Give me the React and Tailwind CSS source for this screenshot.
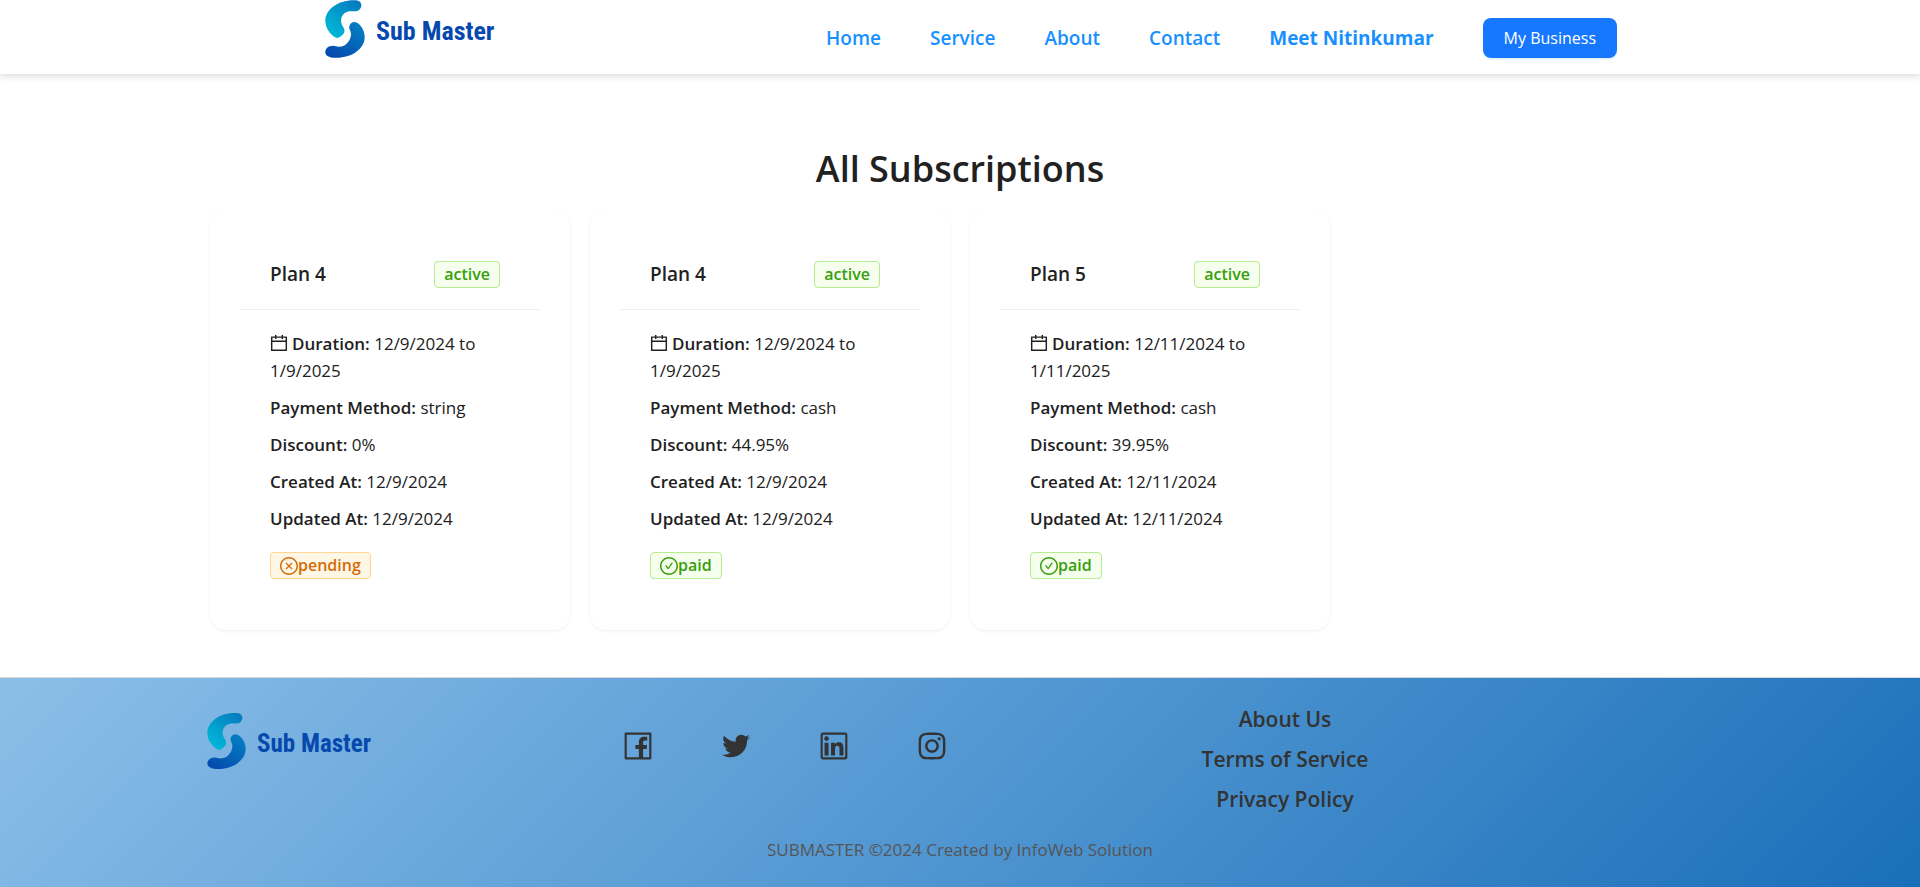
import React from "react";
import {
  AiOutlineCalendar,
  AiOutlineCheckCircle,
  AiOutlineCloseCircle,
  AiOutlineFacebook,
  AiOutlineInstagram,
  AiOutlineLinkedin,
  AiOutlineTwitter,
} from "react-icons/ai";

const ICON_BOX = "64 64 896 896";

const subscriptions = [
  { id: 1, plan: "Plan 4", from: "12/9/2024", to: "1/9/2025", method: "string", discount: "0%", created: "12/9/2024", updated: "12/9/2024", payment: "pending" },
  { id: 2, plan: "Plan 4", from: "12/9/2024", to: "1/9/2025", method: "cash", discount: "44.95%", created: "12/9/2024", updated: "12/9/2024", payment: "paid" },
  { id: 3, plan: "Plan 5", from: "12/11/2024", to: "1/11/2025", method: "cash", discount: "39.95%", created: "12/11/2024", updated: "12/11/2024", payment: "paid" },
];

const socials = [
  { name: "Facebook", Icon: AiOutlineFacebook },
  { name: "Twitter", Icon: AiOutlineTwitter },
  { name: "LinkedIn", Icon: AiOutlineLinkedin },
  { name: "Instagram", Icon: AiOutlineInstagram },
];

const SWOOSH =
  "M94 0 C40 -3 1 28 1 62 C1 84 14 99 27 110 Q37 118 47 110 L55 103 Q62 95 57 84 C49 74 46 61 51 50 C56 38 67 33 80 33 L94 33 C103 32 110 24 110 15 C110 6 103 1 94 0 Z";

function Logo({ id, markClass, textClass }) {
  return (
    <a href="#home" className="flex items-center gap-[11px]">
      <svg viewBox="0 0 121 174" className={markClass} aria-hidden="true">
        <defs>
          <linearGradient id={id + "-top"} x1="0.2" y1="1" x2="0.95" y2="0">
            <stop offset="0" stopColor="#00b8d9" />
            <stop offset="0.35" stopColor="#03a5cf" />
            <stop offset="1" stopColor="#0577bd" />
          </linearGradient>
          <linearGradient id={id + "-bottom"} x1="0.2" y1="1" x2="0.95" y2="0">
            <stop offset="0" stopColor="#0549ae" />
            <stop offset="1" stopColor="#0583c3" />
          </linearGradient>
        </defs>
        <path d={SWOOSH} fill={"url(#" + id + "-top)"} />
        <path
          d="M27 174 C81 177 120 146 120 112 C120 88 107 74 97 68 Q87 63 78 70 Q70 79 75 89 C82 101 78 116 71 125 C65 136 54 141 41 141 L25 138 C12 137 1 146 1 157 C1 167 13 173 27 174 Z"
          fill={"url(#" + id + "-bottom)"}
        />
      </svg>
      <span className={textClass}>Sub Master</span>
    </a>
  );
}

function Tag({ tone, Icon, children }) {
  const tones = {
    green: "border-[#b7eb8f] bg-[#f6ffed] text-[#389e0d]",
    orange: "border-[#ffd591] bg-[#fff7e6] text-[#d46b08]",
  };
  return (
    <span className={"inline-flex items-center rounded-[4px] border px-[9px] text-base leading-[25px] font-semibold " + tones[tone]}>
      {Icon && <Icon viewBox={ICON_BOX} className="size-[18px] shrink-0" />}
      {children}
    </span>
  );
}

function Row({ label, children }) {
  return (
    <p>
      <strong className="font-semibold">{label}:</strong> {children}
    </p>
  );
}

function SubscriptionCard({ item }) {
  const paid = item.payment === "paid";
  return (
    <article className="rounded-2xl bg-white px-[30px] pt-[30px] pb-[51px] shadow-[0_1px_2px_0_rgba(0,0,0,0.03),0_1px_6px_-1px_rgba(0,0,0,0.03),0_2px_4px_0_rgba(0,0,0,0.02)]">
      <header className="flex items-center justify-between border-b border-[#f0f0f0] pt-[22px] pr-10 pb-[21px] pl-[30px]">
        <h2 className="text-[19px] leading-[27px] font-semibold">{item.plan}</h2>
        <Tag tone="green">active</Tag>
      </header>
      <div className="flex flex-col gap-[10px] px-[30px] pt-5 text-[17px] leading-[27px]">
        <p>
          <AiOutlineCalendar viewBox={ICON_BOX} className="mr-1 -mt-1 inline size-[18px]" />
          <strong className="font-semibold">Duration:</strong> {item.from} to {item.to}
        </p>
        <Row label="Payment Method">{item.method}</Row>
        <Row label="Discount">{item.discount}</Row>
        <Row label="Created At">{item.created}</Row>
        <Row label="Updated At">{item.updated}</Row>
        <div className="flex pt-[10px]">
          <Tag tone={paid ? "green" : "orange"} Icon={paid ? AiOutlineCheckCircle : AiOutlineCloseCircle}>
            {item.payment}
          </Tag>
        </div>
      </div>
    </article>
  );
}

export default function App() {
  return (
    <div className="flex min-h-screen flex-col bg-white font-['Open_Sans','Noto_Sans',sans-serif] text-[#212121]">
      <header className="relative bg-white shadow-[0_2px_8px_rgba(0,0,0,0.15)]">
        <div className="mx-auto flex h-[74px] max-w-[1314px] items-start justify-between pl-[22px]">
          <Logo id="head" markClass="h-[58px] w-10" textClass="pt-[5px] font-['Roboto_Condensed','Liberation_Sans_Narrow','Roboto',sans-serif] text-[26px] font-bold text-[#0549ae]" />
          <nav className="flex h-full items-center gap-[49px] pt-[2px] text-[19px] font-semibold text-[#1890ff]">
            <a href="#home">Home</a>
            <a href="#service">Service</a>
            <a href="#about">About</a>
            <a href="#contact">Contact</a>
            <a href="#meet" className="font-bold">Meet Nitinkumar</a>
            <button type="button" className="h-10 rounded-lg bg-[#1677ff] px-[21px] text-base font-normal text-white shadow-[0_2px_0_rgba(5,145,255,0.1)]">
              My Business
            </button>
          </nav>
        </div>
      </header>

      <main className="mx-auto w-full max-w-[1520px] px-[10px] pt-[70px] pb-[47px]">
        <h1 className="pb-[15px] text-center text-4xl leading-[50px] font-semibold">All Subscriptions</h1>
        <div className="grid grid-cols-4 gap-5">
          {subscriptions.map((item) => (
            <SubscriptionCard key={item.id} item={item} />
          ))}
        </div>
      </main>

      <footer className="grow border-t border-[#d9d9d9] bg-[linear-gradient(135deg,#8bbfe8_0%,#5297d2_50%,#1a6fb9_100%)] text-[#333333]">
        <div className="mx-auto grid max-w-[1520px] grid-cols-[335fr_500fr_500fr_185fr] pt-5">
          <div className="pt-[15px] pl-[7px]">
            <Logo id="foot" markClass="h-14 w-[39px]" textClass="pt-[5px] font-['Roboto_Condensed','Liberation_Sans_Narrow','Roboto',sans-serif] text-[25px] font-bold text-[#0549ae]" />
          </div>
          <div className="flex justify-center gap-[68px] pt-[33px]">
            {socials.map(({ name, Icon }) => (
              <a key={name} href={"#" + name.toLowerCase()} aria-label={name} className="size-[30px]">
                <Icon viewBox={ICON_BOX} className="size-[30px]" />
              </a>
            ))}
          </div>
          <ul className="flex flex-col items-center gap-[10px] pt-[6px] text-[21px] leading-[30px] font-semibold">
            <li><a href="#about-us">About Us</a></li>
            <li><a href="#terms">Terms of Service</a></li>
            <li><a href="#privacy">Privacy Policy</a></li>
          </ul>
        </div>
        <p className="pt-[23px] pb-6 text-center text-[17px] leading-[26px] text-[#555555]">SUBMASTER ©2024 Created by InfoWeb Solution</p>
      </footer>
    </div>
  );
}
